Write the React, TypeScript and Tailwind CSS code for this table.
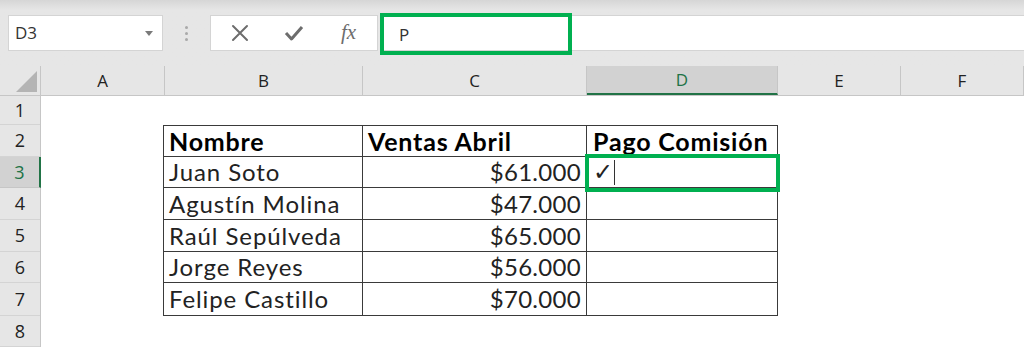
import React from "react";

const uiFont = { fontFamily: '"Open Sans", "Noto Sans", sans-serif' };
const cellFont = { fontFamily: 'Lato, "Open Sans", sans-serif' };

const columns = [
  { key: "A", w: "w-[124px]" },
  { key: "B", w: "w-[198px]" },
  { key: "C", w: "w-[224px]" },
  { key: "D", w: "w-[191px]" },
  { key: "E", w: "w-[123px]" },
  { key: "F", w: "flex-1" },
];

const rowHeights = ["h-[29px]", "h-[32px]", "h-[31px]", "h-[32px]", "h-[32px]", "h-[31px]", "h-[33px]", "h-[31px]"];

const data = [
  ["Juan Soto", "$61.000"],
  ["Agustín Molina", "$47.000"],
  ["Raúl Sepúlveda", "$65.000"],
  ["Jorge Reyes", "$56.000"],
  ["Felipe Castillo", "$70.000"],
];

function CancelIcon() {
  return (
    <svg width="18" height="18" viewBox="0 0 18 18">
      <path d="M2 2 L16 16 M16 2 L2 16" stroke="#6d6d6d" strokeWidth="2" strokeLinecap="round" />
    </svg>
  );
}

function EnterIcon() {
  return (
    <svg width="20" height="18" viewBox="0 0 20 18">
      <path d="M2 9 L7.5 15 L18 3" fill="none" stroke="#6d6d6d" strokeWidth="3" strokeLinejoin="round" />
    </svg>
  );
}

export default function App() {
  return (
    <div className="w-[1024px] h-[347px] overflow-hidden bg-white" style={uiFont}>
      {/* ribbon edge + formula bar */}
      <div className="h-[66px] bg-[#e6e6e6] bg-gradient-to-b from-[#d6d6d6] to-[#e6e6e6] to-[10px] flex items-start pt-[15px]">
        <div className="ml-[8px] w-[155px] h-[36px] bg-white border border-[#d4d4d4] flex items-center justify-between pl-[6px] pr-[9px]">
          <span className="text-[17px] text-[#333]">D3</span>
          <svg width="8" height="5" viewBox="0 0 8 5">
            <path d="M0 0 H8 L4 5 Z" fill="#7a7a7a" />
          </svg>
        </div>
        <div className="w-[47px] h-[36px] flex flex-col items-center justify-center gap-[3px]">
          <span className="w-[3px] h-[3px] rounded-full bg-[#a9a9a9]" />
          <span className="w-[3px] h-[3px] rounded-full bg-[#a9a9a9]" />
          <span className="w-[3px] h-[3px] rounded-full bg-[#a9a9a9]" />
        </div>
        <div className="w-[168px] h-[36px] bg-white border border-[#d4d4d4] flex items-center">
          <div className="w-[55px] flex justify-center pl-[2px]"><CancelIcon /></div>
          <div className="w-[55px] flex justify-center"><EnterIcon /></div>
          <div
            className="w-[55px] flex justify-center text-[21px] italic text-[#6d6d6d]"
            style={{ fontFamily: '"Liberation Serif", serif' }}
          >
            fx
          </div>
        </div>
        <div className="ml-[2px] flex-1 h-[36px] bg-white border-y border-[#d4d4d4] relative">
          <div className="absolute left-[0px] top-[-3px] w-[192px] h-[42px] border-[4px] border-[#00b050]" />
          <span className="absolute left-[19px] top-[6px] text-[17px] text-[#333]">P</span>
        </div>
      </div>

      {/* column headers */}
      <div className="h-[30px] flex bg-[#e6e6e6] border-b border-[#c6c6c6]">
        <div className="w-[41px] h-full border-r border-[#c6c6c6] flex items-end justify-start pl-[16px] pb-[3px]">
          <svg width="21" height="21" viewBox="0 0 21 21">
            <path d="M21 0 V21 H0 Z" fill="#b4b4b4" />
          </svg>
        </div>
        {columns.map((c) =>
          c.key === "D" ? (
            <div
              key={c.key}
              className={`${c.w} h-full bg-[#d2d2d2] border-b-2 border-[#217346] border-r border-r-[#c6c6c6] flex items-center justify-center text-[17px] text-[#217346]`}
            >
              {c.key}
            </div>
          ) : (
            <div
              key={c.key}
              className={`${c.w} h-full border-r border-[#c6c6c6] flex items-center justify-center text-[17px] text-[#222]`}
            >
              {c.key}
            </div>
          )
        )}
      </div>

      {/* sheet body */}
      <div className="flex">
        <div className="w-[41px] bg-[#e6e6e6] border-r border-[#c6c6c6] flex flex-col">
          {rowHeights.map((h, i) =>
            i === 2 ? (
              <div
                key={i}
                className={`${h} bg-[#d2d2d2] border-b border-[#c6c6c6] border-r-2 border-r-[#217346] mr-[-1px] flex items-center justify-center text-[18px] text-[#217346]`}
              >
                {i + 1}
              </div>
            ) : (
              <div
                key={i}
                className={`${h} border-b border-[#d4d4d4] flex items-center justify-center text-[18px] text-[#222]`}
              >
                {i + 1}
              </div>
            )
          )}
        </div>

        <div className="flex-1 flex flex-col" style={cellFont}>
          <div className="h-[29px]" />
          <div className="ml-[122px] w-[615px] border-[1.5px] border-[#3a3a3a] text-[#222]">
            <div className="h-[31px] flex border-b border-[#3a3a3a] font-bold text-[25px] tracking-[0.8px] text-black leading-none">
              <div className="w-[199px] border-r border-[#3a3a3a] flex items-center pl-[5px]">Nombre</div>
              <div className="w-[224px] border-r border-[#3a3a3a] flex items-center pl-[5px]">Ventas Abril</div>
              <div className="flex-1 flex items-center pl-[6px]">Pago Comisión</div>
            </div>
            {data.map(([name, amount], i) => (
              <div
                key={name}
                className={`${["h-[31px]", "h-[32px]", "h-[32px]", "h-[31px]", "h-[32px]"][i]} flex text-[24px] leading-none ${
                  i < data.length - 1 ? "border-b border-[#3a3a3a]" : ""
                }`}
              >
                <div className="w-[199px] border-r border-[#3a3a3a] flex items-center pl-[5px] tracking-[0.9px]">{name}</div>
                <div className="w-[224px] border-r border-[#3a3a3a] flex items-center justify-end pr-[5px] tracking-[0.3px]">{amount}</div>
                <div className="flex-1 relative flex items-center pl-[6px]">
                  {i === 0 && (
                    <>
                      <div className="absolute left-[-2px] top-[-3px] right-[-3px] bottom-[-5px] border-[4px] border-[#00b050]" />
                      <span className="text-[24px] text-[#222]" style={{ fontFamily: '"DejaVu Sans", sans-serif' }}>
                        ✓
                      </span>
                      <span className="ml-[1px] w-[1px] h-[25px] bg-[#333]" />
                    </>
                  )}
                </div>
              </div>
            ))}
          </div>
        </div>
      </div>
    </div>
  );
}
